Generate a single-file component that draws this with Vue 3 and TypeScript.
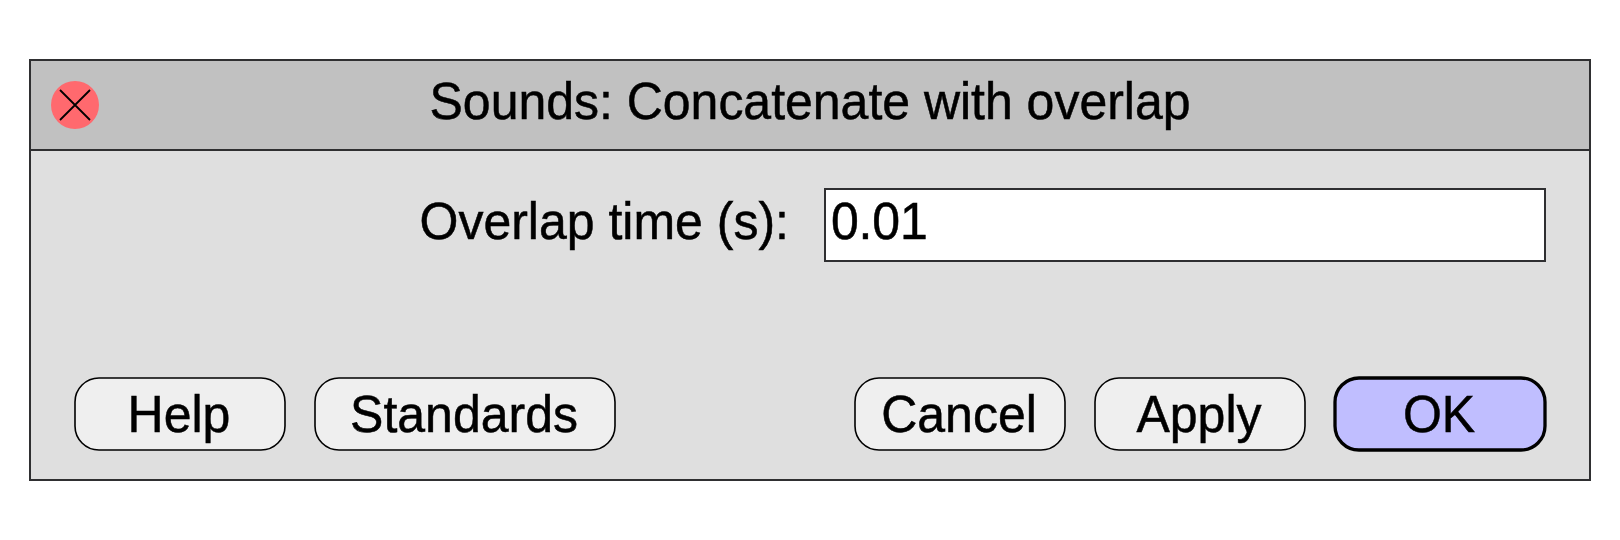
<script setup lang="ts">
import { ref } from 'vue'

interface DialogButton {
  label: string
  width: number
  primary?: boolean
}

const overlapTime = ref('0.01')

const leftButtons: DialogButton[] = [
  { label: 'Help', width: 210 },
  { label: 'Standards', width: 300 },
]
const rightButtons: DialogButton[] = [
  { label: 'Cancel', width: 210 },
  { label: 'Apply', width: 210 },
  { label: 'OK', width: 210, primary: true },
]
const groups = [leftButtons, rightButtons]
</script>

<template>
  <main class="page">
    <section class="dialog">
      <header class="titlebar">
        <svg class="close" viewBox="0 0 48 48">
          <circle cx="24" cy="24" r="24" fill="#ff696e" />
          <path d="M9 9 39 39M39 9 9 39" stroke="#000" stroke-width="1.8" />
        </svg>
        <h1 class="title"><span class="text">Sounds: Concatenate with overlap</span></h1>
      </header>
      <div class="field">
        <label class="label" for="overlap"><span class="text">Overlap time (s):</span></label>
        <div class="box">
          <input id="overlap" v-model="overlapTime" class="text input" type="text" />
        </div>
      </div>
      <footer class="actions">
        <div v-for="(group, i) in groups" :key="i" class="group">
          <button
            v-for="b in group"
            :key="b.label"
            class="button"
            :class="{ primary: b.primary }"
            :style="{ width: b.width + 'px' }"
          >
            <svg class="outline" :width="b.width" height="72">
              <rect x="0" y="0" :width="b.width" height="72" rx="24" />
            </svg>
            <span class="text caption">{{ b.label }}</span>
          </button>
        </div>
      </footer>
    </section>
  </main>
</template>

<style>
body {
  margin: 0;
  background: #fff;
}
</style>

<style scoped>
.page {
  box-sizing: border-box;
  width: 1620px;
  height: 540px;
  padding: 59px 29px;
  background: #fff;
  font-family: 'Liberation Sans', Arial, sans-serif;
  font-size: 50px;
  line-height: 58px;
  color: #000;
}
.dialog {
  box-sizing: border-box;
  width: 1562px;
  height: 422px;
  display: flex;
  flex-direction: column;
  border: 2px solid #2f2f31;
  background: #dfdfdf;
}
.titlebar {
  box-sizing: border-box;
  height: 90px;
  display: grid;
  grid-template-columns: 48px 1fr 48px;
  padding: 0 20px;
  align-items: center;
  background: #c1c1c1;
  border-bottom: 2px solid #2f2f31;
}
.close {
  width: 48px;
  height: 48px;
}
.title {
  margin: 0;
  font: inherit;
  text-align: center;
  padding-bottom: 6px;
  letter-spacing: -0.02px;
}
/* Scaled from the baseline, slightly emboldened */
.text {
  display: inline-block;
  white-space: pre;
  transform: scaleY(1.03);
  transform-origin: 0 46px;
  -webkit-text-stroke: 0.5px #000;
}
.field {
  display: grid;
  grid-template-columns: 758px 722px;
  column-gap: 35px;
  padding-top: 37px;
}
.label {
  text-align: right;
  padding-top: 5px;
}
.box {
  box-sizing: border-box;
  height: 74px;
  padding: 3px 5px 0;
  border: 2px solid #2f2f31;
  background: #fff;
}
.input {
  display: block;
  box-sizing: border-box;
  width: 100%;
  height: 58px;
  margin: 0;
  padding: 0;
  border: 0;
  outline: none;
  background: transparent;
  font: inherit;
  color: inherit;
  letter-spacing: -0.2px;
}
.actions {
  display: flex;
  justify-content: space-between;
  margin-top: auto;
  padding: 0 44px 29px;
}
.group {
  display: flex;
  gap: 30px;
}
.button {
  box-sizing: border-box;
  position: relative;
  height: 72px;
  padding: 2px 2px 0 0;
  border: 0;
  background: none;
  font: inherit;
  color: inherit;
}
.outline {
  position: absolute;
  inset: 0;
  overflow: visible;
  fill: #efefef;
  stroke: #000;
  stroke-width: 1.6;
}
.primary .outline {
  fill: #c0beff;
  stroke-width: 3.3;
}
.caption {
  position: relative;
}
</style>
